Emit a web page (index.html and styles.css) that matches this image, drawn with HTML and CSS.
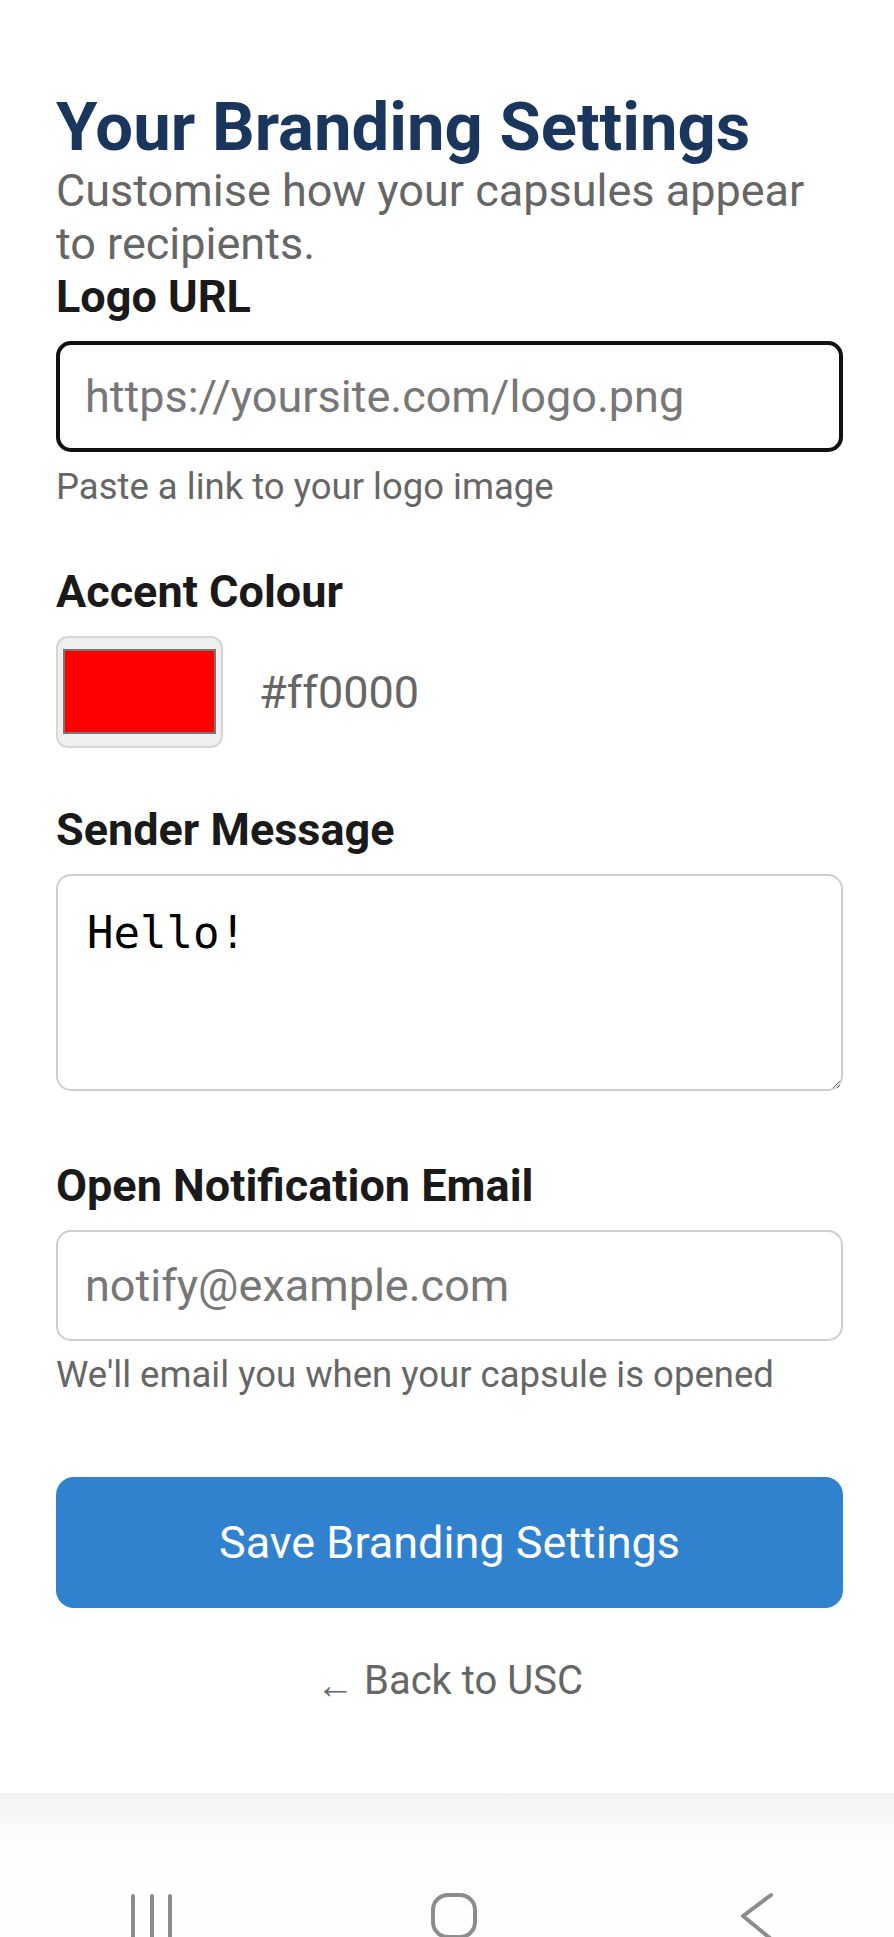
FILE: index.html
```html
<!DOCTYPE html>
<html lang="en">
<head>
  <meta charset="UTF-8">
  <title>Your Branding Settings</title>
  <link rel="stylesheet" href="styles.css">
</head>
<body>
  <main class="page">
    <h1 class="title">Your Branding Settings</h1>
    <p class="subtitle">Customise how your capsules appear to recipients.</p>

    <form class="branding-form" onsubmit="return false;">
      <div class="field">
        <label for="logo_url">Logo URL</label>
        <input type="text" id="logo_url" class="text-input focused" placeholder="https://yoursite.com/logo.png">
        <div class="hint">Paste a link to your logo image</div>
      </div>

      <div class="field">
        <label>Accent Colour</label>
        <div class="colour-row">
          <div class="swatch"><div class="swatch-fill"></div></div>
          <span class="colour-value">#ff0000</span>
        </div>
      </div>

      <div class="field">
        <label for="sender_message">Sender Message</label>
        <textarea id="sender_message" class="message-input">Hello!</textarea>
      </div>

      <div class="field field-email">
        <label for="notify_email">Open Notification Email</label>
        <input type="email" id="notify_email" class="text-input" placeholder="notify@example.com">
        <div class="hint hint-tight">We'll email you when your capsule is opened</div>
      </div>

      <button type="submit" class="save-btn">Save Branding Settings</button>
    </form>

    <a class="back-link" href="#"><span class="arrow">&larr;</span> Back to USC</a>
  </main>

  <nav class="system-nav">
    <svg class="nav-recent" width="44" height="50" viewBox="0 0 44 50">
      <path d="M3 3v60M22 3v60M40 3v60" stroke="#8c8c8c" stroke-width="4" stroke-linecap="round" fill="none"/>
    </svg>
    <svg class="nav-home" width="46" height="50" viewBox="0 0 46 50">
      <rect x="2" y="2" width="42" height="42" rx="15" stroke="#8c8c8c" stroke-width="4" fill="none"/>
    </svg>
    <svg class="nav-back" width="34" height="50" viewBox="0 0 34 50">
      <polyline points="31,2 3,23 31,46" stroke="#8c8c8c" stroke-width="4" stroke-linecap="round" stroke-linejoin="round" fill="none"/>
    </svg>
  </nav>
</body>
</html>
```

FILE: styles.css
```css
body {
  margin: 0;
  font-family: Roboto, 'Liberation Sans', sans-serif;
  background: #fff;
  display: flex;
  flex-direction: column;
  min-height: 100vh;
  overflow: hidden;
}
.page {
  flex: 1;
  padding: 91px 51px 0 56px;
}
.title {
  margin: 0;
  font-size: 67px;
  line-height: 72px;
  font-weight: 700;
  color: #1a365d;
}
.subtitle {
  margin: 1px 0 0 0;
  font-size: 45px;
  line-height: 53px;
  color: #666;
}
.branding-form {
  display: flex;
  flex-direction: column;
}
.field label {
  display: block;
  font-size: 45px;
  line-height: 53px;
  font-weight: 700;
  color: #1a1a1a;
  margin-bottom: 18px;
}
.field + .field {
  margin-top: 55px;
}
.field-email {
  margin-top: 68px !important;
}
.text-input {
  display: block;
  width: 100%;
  height: 111px;
  box-sizing: border-box;
  border: 2px solid #cfcfcf;
  border-radius: 15px;
  padding: 0 27px;
  font-family: Roboto, 'Liberation Sans', sans-serif;
  font-size: 45px;
  color: #111;
  background: #fff;
  outline: none;
}
.text-input::placeholder {
  color: #777;
}
.text-input.focused {
  outline: 4px solid #111;
  outline-offset: -4px;
}
.hint {
  margin-top: 12px;
  font-size: 36.5px;
  line-height: 46px;
  color: #666;
}
.hint-tight {
  margin-top: 11px;
}
.colour-row {
  display: flex;
  align-items: center;
  gap: 36px;
}
.swatch {
  width: 167px;
  height: 112px;
  box-sizing: border-box;
  background: #efefef;
  border: 2px solid #d6d6d6;
  border-radius: 12px;
  padding: 11px 5px 12px 5px;
}
.swatch-fill {
  height: 100%;
  box-sizing: border-box;
  background: #ff0000;
  border: 2px solid #777;
}
.colour-value {
  font-size: 45px;
  color: #666;
}
.message-input {
  display: block;
  width: 100%;
  height: 217px;
  box-sizing: border-box;
  border: 2px solid #cfcfcf;
  border-radius: 15px;
  padding: 31px 24px 24px 29px;
  font-family: 'DejaVu Sans Mono', monospace;
  font-size: 44px;
  color: #000;
  background: #fff;
  outline: none;
}
.save-btn {
  margin-top: 79px;
  height: 131px;
  border: none;
  border-radius: 18px;
  background: #3182ce;
  color: #fff;
  font-family: Roboto, 'Liberation Sans', sans-serif;
  font-size: 45px;
  cursor: pointer;
}
.back-link {
  display: block;
  margin-top: 49px;
  text-align: center;
  font-size: 40px;
  line-height: 48px;
  color: #666;
  text-decoration: none;
}
.back-link .arrow {
  font-size: 38px;
  font-weight: 300;
  vertical-align: -4px;
}
.system-nav {
  height: 144px;
  box-sizing: border-box;
  padding: 100px 0 0 130px;
  background: linear-gradient(#f2f2f2, #fcfcfc 40px, #fefefe);
  display: flex;
  align-items: flex-start;
  overflow: hidden;
}
.system-nav svg {
  flex: none;
  overflow: visible;
}
.nav-home {
  margin-left: 257px;
}
.nav-back {
  margin-left: 263px;
}
```
